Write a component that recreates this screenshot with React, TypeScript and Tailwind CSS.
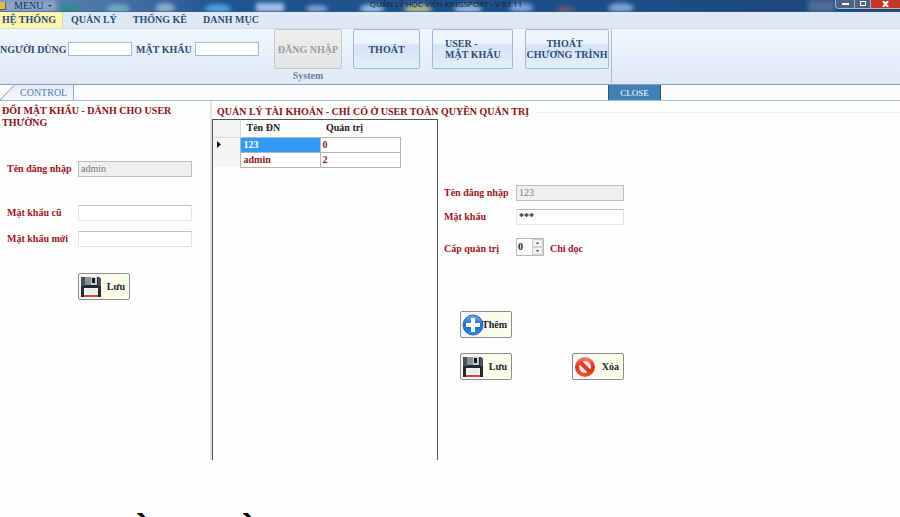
"use client";

import { useState } from "react";
import type { ReactNode } from "react";

const tabs = ["HỆ THỐNG", "QUẢN LÝ", "THỐNG KÊ", "DANH MỤC"];

const accounts = [
  { name: "123", role: 0 },
  { name: "admin", role: 2 },
];

const FloppyIcon = () => (
  <svg className="w-[22px] h-[22px] shrink-0" viewBox="0 0 22 22" aria-hidden="true">
    <path d="M1 1h18l2 2v18H1z" fill="#25272c" />
    <path d="M1 1h4v9H1zM18 1l3 2v7h-3z" fill="#4c4f57" />
    <path d="M5 1h12v8H5z" fill="#c9ccd2" />
    <path d="M5 1h6v8H5z" fill="#8d9199" />
    <path d="M12 2h3v5h-3z" fill="#15161a" />
    <path d="M4 12h14v9H4z" fill="#f6f4f5" />
    <path d="M5 14h12M5 16h12" stroke="#e4e1e4" />
    <path d="M4 19h14v2H4z" fill="#cf4434" />
  </svg>
);

const PlusIcon = () => (
  <svg className="w-[22px] h-[22px] shrink-0" viewBox="0 0 22 22" aria-hidden="true">
    <defs>
      <linearGradient id="plusFill" x1="0" y1="0" x2="0" y2="1">
        <stop offset="0" stopColor="#6aaeea" />
        <stop offset="0.5" stopColor="#1f6fcb" />
        <stop offset="1" stopColor="#2f8be6" />
      </linearGradient>
    </defs>
    <circle cx="11" cy="11" r="10" fill="url(#plusFill)" stroke="#2a62ad" />
    <path d="M9 4h4v5h5v4h-5v5H9v-5H4V9h5z" fill="#fff" />
  </svg>
);

const BanIcon = () => (
  <svg className="w-[22px] h-[22px] shrink-0" viewBox="0 0 22 22" aria-hidden="true">
    <defs>
      <linearGradient id="banFill" x1="0" y1="0" x2="0" y2="1">
        <stop offset="0" stopColor="#f08a70" />
        <stop offset="0.5" stopColor="#d9301c" />
        <stop offset="1" stopColor="#ee5a35" />
      </linearGradient>
    </defs>
    <circle cx="11" cy="11" r="10" fill="url(#banFill)" />
    <circle cx="11" cy="11" r="6" fill="#fbe9e3" />
    <path d="M6 6l10 10" stroke="#dc3a22" strokeWidth="4" />
  </svg>
);

const ActionButton = ({ icon, label }: { icon: ReactNode; label: string }) => (
  <button className="flex items-center justify-between w-[52px] h-[27px] pl-px pr-1 rounded-[2px] border border-[#8c8c8c] bg-gradient-to-r from-[#f7f7f5] to-[#fdfde9] text-[10px] font-bold text-[#222]">
    {icon}
    <span className="-ml-1">{label}</span>
  </button>
);

const RibbonButton = ({ className, children }: { className: string; children: ReactNode }) => (
  <button
    className={`h-10 rounded-[2px] border border-[#a5b8d2] bg-gradient-to-b from-[#eef4fc] from-35% via-[#d6e3f3] via-40% to-[#e3eefa] text-[10px] leading-[11px] font-bold text-[#2c4a78] whitespace-nowrap ${className}`}
  >
    {children}
  </button>
);

const TitleBar = () => (
  <header className="relative flex justify-between h-3 overflow-hidden bg-gradient-to-r from-[#6d8fbb] via-[#1e5590] via-25% to-[#1b477c]">
    {/* wallpaper showing through the glass frame */}
    <svg className="absolute inset-0 w-full h-full" viewBox="0 0 900 12" preserveAspectRatio="none" aria-hidden="true">
      <defs>
        <filter id="glass" x="-20%" y="-50%" width="140%" height="200%">
          <feGaussianBlur stdDeviation="2" />
        </filter>
      </defs>
      <g filter="url(#glass)">
        <path d="M0 0h56v12H0z" fill="#8aa5c8" />
        <ellipse cx="70" cy="9" rx="10" ry="5" fill="#2f8a86" />
        <ellipse cx="118" cy="9" rx="12" ry="5" fill="#6ba9bd" />
        <ellipse cx="165" cy="8" rx="10" ry="5" fill="#8dabc8" />
        <ellipse cx="218" cy="9" rx="13" ry="5" fill="#4a9fd8" />
        <path d="M256 3h28v9h-28z" fill="#a3bfe8" />
        <ellipse cx="317" cy="9" rx="11" ry="4" fill="#7f9fca" />
        <ellipse cx="372" cy="9" rx="12" ry="5" fill="#8fb3dd" />
        <ellipse cx="418" cy="9" rx="14" ry="5" fill="#a9b08e" />
        <ellipse cx="468" cy="9" rx="14" ry="5" fill="#8fb0d6" />
        <ellipse cx="521" cy="8" rx="12" ry="5" fill="#7d9fd4" />
        <ellipse cx="566" cy="10" rx="10" ry="3" fill="#7b5a72" />
        <ellipse cx="621" cy="8" rx="13" ry="5" fill="#7ea0d2" />
        <path d="M808 0h27v12h-27z" fill="#4d6c96" />
      </g>
      <path d="M0 11.5h900" stroke="#315f96" strokeOpacity="0.6" />
    </svg>
    <div className="relative flex flex-1 items-center gap-2">
      <span className="w-[6px] h-2 bg-[#eeb850] border-r border-b border-[#5d5a50]" />
      <button className="flex items-center gap-[5px] text-[10px] leading-3 text-[#1b2f52] whitespace-nowrap">
        MENU
        <svg className="w-1 h-[2px]" viewBox="0 0 4 2" aria-hidden="true">
          <path d="M0 0h4L2 2z" fill="#1b2f52" />
        </svg>
      </button>
    </div>
    <h1 className="relative text-[8px] leading-[8px] text-[#0e1c33] whitespace-nowrap font-['Open_Sans',sans-serif]">
      QUẢN LÝ HỌC VIÊN KINGSPORT - V 03.11
    </h1>
    <div className="relative flex flex-1 justify-end pl-2">
      <button aria-label="Thu nhỏ" className="flex justify-center w-5 h-[9px] rounded-bl border border-t-0 border-[#a4b6cd] bg-[#4c6385]">
        <span className="mt-[3px] w-[7px] h-[2px] bg-white" />
      </button>
      <button aria-label="Phóng to" className="flex justify-center w-4 h-[9px] border-r border-b border-[#a4b6cd] bg-[#4c6385]">
        <span className="mt-px w-[6px] h-[5px] border border-white" />
      </button>
      <button aria-label="Đóng" className="flex justify-center w-[29px] h-[9px] border-b border-[#d9a79c] bg-[#c23a27]">
        <svg className="w-[7px] h-[6px] mt-px" viewBox="0 0 7 6" aria-hidden="true">
          <path d="M1 0l5 6M6 0L1 6" stroke="#fff" strokeWidth="2" />
        </svg>
      </button>
    </div>
  </header>
);

const Ribbon = () => (
  <section className="flex h-14 border-t border-[#cfdbea] border-b border-b-[#dce6f2] bg-gradient-to-b from-[#f1f7fe] to-[#dfe9f6] text-[10px] font-bold text-[#2c4a78]">
    <div className="flex items-start pr-[2px] border-r border-[#a9bbd3]">
      <form className="flex items-center h-10 whitespace-nowrap">
        <label htmlFor="ribbonUser" className="w-[68px]">NGƯỜI DÙNG</label>
        <input id="ribbonUser" className="w-16 h-[14px] px-1 border border-[#a6b9d3] bg-white outline-none" />
        <label htmlFor="ribbonPass" className="w-[63px] pl-1">MẬT KHẨU</label>
        <input id="ribbonPass" type="password" className="w-16 h-[14px] px-1 border border-[#a6b9d3] bg-white outline-none" />
      </form>
      <div className="flex flex-col items-center ml-[15px]">
        <button disabled className="w-[68px] h-10 rounded-[2px] border border-[#c4c8ce] bg-gradient-to-b from-[#eeeeee] to-[#e4e5e6] text-[10px] text-[#9a9ca0] whitespace-nowrap">
          ĐĂNG NHẬP
        </button>
        <span className="text-[10px] leading-[14px] text-[#6f7f96]">System</span>
      </div>
      <div className="flex gap-3 ml-[11px]">
        <RibbonButton className="w-[67px]">THOÁT</RibbonButton>
        <RibbonButton className="w-[81px] pl-3 text-left">
          USER -<br />MẬT KHẨU
        </RibbonButton>
        <RibbonButton className="w-[84px]">
          THOÁT&nbsp;&nbsp;<br />CHƯƠNG TRÌNH
        </RibbonButton>
      </div>
    </div>
  </section>
);

const fieldClass = "w-full h-4 px-[2px] border text-[10px] outline-none";
const readOnlyClass = "border-[#bdbdbd] bg-[#efefef] font-normal text-[#777]";
const editableClass = "border-[#e6e6e6] border-t-[#c2c2c2] bg-white font-bold text-[#222]";

const PasswordPanel = () => (
  <section className="w-[212px] shrink-0 pt-1 border-r-2 border-[#e2e2e2]">
    <h2 className="px-[2px] text-[10px] leading-3 font-bold text-[#8b1016]">ĐỔI MẬT KHẨU - DÀNH CHO USER THƯỜNG</h2>
    <form className="grid grid-cols-[71px_1fr] items-center pl-[7px] pr-[18px] text-[10px] leading-4 font-bold text-[#9c1424] whitespace-nowrap">
      <label htmlFor="curUser" className="mt-8">Tên đăng nhập</label>
      <input id="curUser" readOnly defaultValue="admin" className={`mt-8 ${fieldClass} ${readOnlyClass}`} />
      <label htmlFor="oldPass" className="mt-7">Mật khẩu cũ</label>
      <input id="oldPass" type="password" className={`mt-7 ${fieldClass} ${editableClass}`} />
      <label htmlFor="newPass" className="mt-[10px]">Mật khẩu mới</label>
      <input id="newPass" type="password" className={`mt-[10px] ${fieldClass} ${editableClass}`} />
      <div className="col-start-2 mt-[26px]">
        <ActionButton icon={<FloppyIcon />} label="Lưu" />
      </div>
    </form>
  </section>
);

const AccountTable = ({ selected, onSelect }: { selected: number; onSelect: (i: number) => void }) => (
  <div className="w-[226px] shrink-0 border border-b-0 border-[#555]">
    <table className="table-fixed w-[187px] border-collapse text-[10px] leading-[14px] font-bold text-left">
      <colgroup>
        <col className="w-[27px]" />
        <col className="w-20" />
        <col className="w-20" />
      </colgroup>
      <thead>
        <tr className="h-[17px] text-[#222]">
          <th className="border-r border-b border-[#dcdcdc] bg-[#f4f5f7]" />
          <th className="pl-[6px] border-b border-[#b5b5b5]">Tên ĐN</th>
          <th className="pl-[6px] border-b border-[#b5b5b5]">Quản trị</th>
        </tr>
      </thead>
      <tbody>
        {accounts.map((a, i) => (
          <tr key={a.name} onClick={() => onSelect(i)} className="h-[15px] text-[#8b1a1f]">
            <td className="pl-1 bg-[#f4f5f7] border-r border-[#b5b5b5]">
              {selected === i && (
                <svg className="w-1 h-[7px]" viewBox="0 0 4 7" aria-hidden="true">
                  <path d="M0 0l4 3.5L0 7z" fill="#111" />
                </svg>
              )}
            </td>
            <td className={`pl-[3px] border border-[#b5b5b5] ${selected === i ? "bg-[#3399f5] text-white" : ""}`}>{a.name}</td>
            <td className="pl-[2px] border border-[#b5b5b5]">{a.role}</td>
          </tr>
        ))}
      </tbody>
    </table>
  </div>
);

const AccountForm = () => {
  const [level, setLevel] = useState(0);

  return (
    <form className="flex-1 pl-[6px] pt-[66px] text-[10px] leading-4 font-bold text-[#9c1424] whitespace-nowrap">
      <div className="grid grid-cols-[72px_108px] gap-y-2 items-center">
        <label htmlFor="accUser">Tên đăng nhập</label>
        <input id="accUser" readOnly defaultValue="123" className={`${fieldClass} ${readOnlyClass}`} />
        <label htmlFor="accPass">Mật khẩu</label>
        <input id="accPass" defaultValue="***" className={`${fieldClass} ${editableClass}`} />
      </div>
      <div className="flex items-center mt-3">
        <label htmlFor="accLevel" className="w-[72px] pt-1">Cấp quản trị</label>
        <div className="flex w-7 h-[18px] border border-[#b8b8b8] bg-white">
          <input
            id="accLevel"
            value={level}
            onChange={(e) => setLevel(Number(e.target.value) || 0)}
            className="w-[15px] pl-px text-[#222] outline-none"
          />
          <div className="flex flex-col w-[11px]">
            <button type="button" aria-label="Tăng" onClick={() => setLevel(level + 1)} className="flex flex-1 items-center justify-center border border-[#d0d0d0] bg-[#f1f1f1]">
              <svg className="w-[3px] h-[2px]" viewBox="0 0 3 2" aria-hidden="true"><path d="M0 2h3L1.5 0z" fill="#444" /></svg>
            </button>
            <button type="button" aria-label="Giảm" onClick={() => setLevel(Math.max(0, level - 1))} className="flex flex-1 items-center justify-center border border-[#d0d0d0] bg-[#f1f1f1]">
              <svg className="w-[3px] h-[2px]" viewBox="0 0 3 2" aria-hidden="true"><path d="M0 0h3L1.5 2z" fill="#444" /></svg>
            </button>
          </div>
        </div>
        <span className="pl-[6px] pt-1">Chỉ đọc</span>
      </div>
      <div className="grid grid-cols-[52px_52px] gap-x-[60px] gap-y-[15px] pl-4 mt-[54px]">
        <ActionButton icon={<PlusIcon />} label="Thêm" />
        <div className="col-start-1">
          <ActionButton icon={<FloppyIcon />} label="Lưu" />
        </div>
        <ActionButton icon={<BanIcon />} label="Xóa" />
      </div>
    </form>
  );
};

const App = () => {
  const [tab, setTab] = useState(0);
  const [selected, setSelected] = useState(0);

  return (
    <div className="flex flex-col h-screen overflow-hidden bg-[#fefefe] font-['Liberation_Serif',serif]">
      <TitleBar />

      {/* Ribbon tabs */}
      <nav className="flex h-4 bg-[#dfe8f5] text-[10px] leading-4 font-bold text-[#2c4a78]">
        {tabs.map((t, i) => (
          <button
            key={t}
            onClick={() => setTab(i)}
            className={`whitespace-nowrap ${tab === i ? "pl-[2px] pr-[6px] mr-2 border-r border-[#cdd3c0] bg-[#fbf6a9]" : "mr-4"}`}
          >
            {t}
          </button>
        ))}
      </nav>

      <Ribbon />

      {/* Document tabs */}
      <div className="flex h-[17px] border-t border-[#8e9db3] border-b border-b-[#a9b9d0] bg-[#fbfcff] text-[10px] leading-4">
        <button className="flex items-center pr-[6px] border-r border-[#93a6c2] bg-gradient-to-b from-[#e3edf9] to-[#f4f8fe] text-[#5a7ba6]">
          <svg className="w-5 h-[15px]" viewBox="0 0 20 15" aria-hidden="true">
            <path d="M0 0h14L0 15z" fill="#fff" />
            <path d="M0 15L14 0.5" stroke="#8294af" fill="none" />
          </svg>
          CONTROL
        </button>
        <div className="flex-1" />
        <button className="w-[53px] border-x border-[#2b5480] bg-[#4080b8] text-[9px] text-white">CLOSE</button>
        <div className="w-[239px]" />
      </div>

      <main className="flex flex-1">
        <PasswordPanel />
        <section className="flex flex-col flex-1">
          <div className="flex items-center gap-2 pl-[5px] pt-1">
            <h2 className="text-[10px] leading-[14px] font-bold text-[#8b1016] whitespace-nowrap">
              QUẢN LÝ TÀI KHOẢN - CHỈ CÓ Ở USER TOÀN QUYỀN QUẢN TRỊ
            </h2>
            <div className="flex-1 h-px bg-[#efefef]" />
          </div>
          <div className="flex flex-1">
            <AccountTable selected={selected} onSelect={setSelected} />
            <AccountForm />
          </div>
        </section>
      </main>

      <footer className="flex h-[57px] pt-[50px] pl-[136px] gap-[93px] overflow-hidden text-[38px] leading-[38px] font-bold text-black font-['Liberation_Sans',sans-serif]">
        <span>`</span>
        <span>`</span>
      </footer>
    </div>
  );
};

export default App;
